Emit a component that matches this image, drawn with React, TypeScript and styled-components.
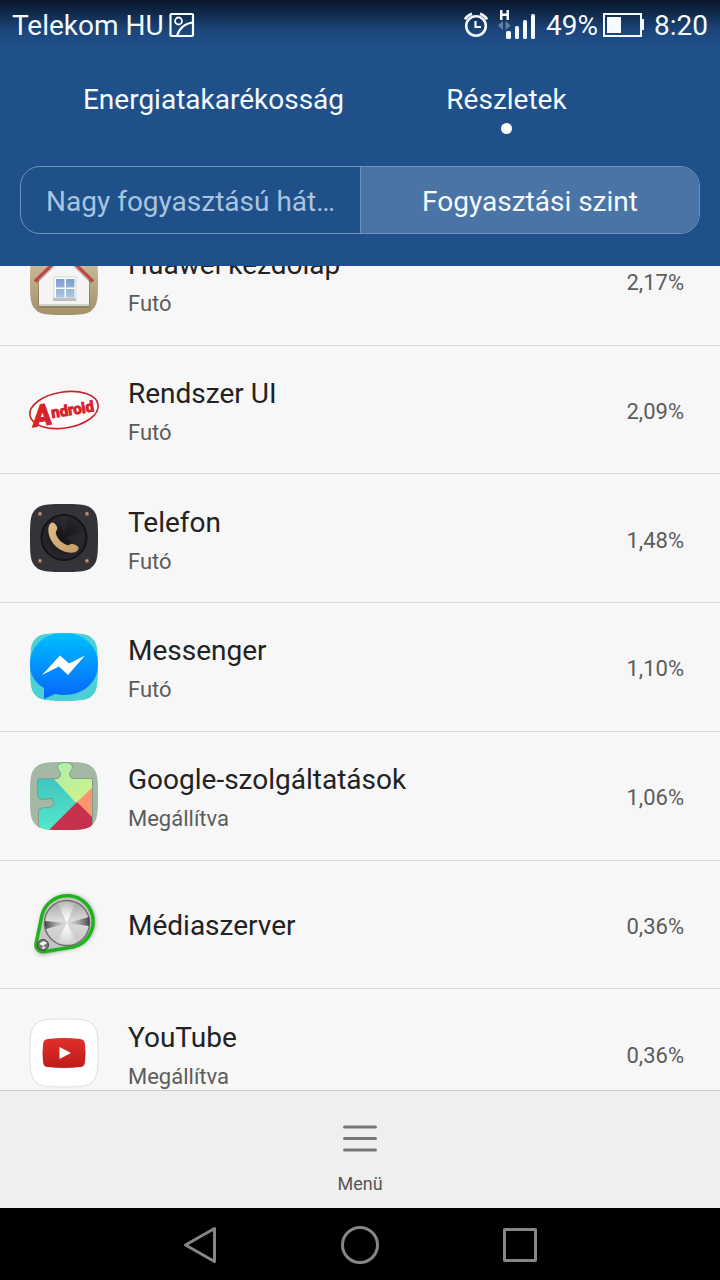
import React from "react";
import styled, { createGlobalStyle } from "styled-components";

const GlobalStyle = createGlobalStyle`
  *, *::before, *::after { box-sizing: border-box; }
  body { margin: 0; background: #000; font-family: Roboto, "Liberation Sans", sans-serif; }
  button { margin: 0; padding: 0; border: 0; background: none; color: inherit; font: inherit; cursor: pointer; }
  svg { display: block; flex: none; }
`;

const Screen = styled.div`
  display: flex;
  flex-direction: column;
  height: 100vh;
  background: #f7f7f7;
`;

const Header = styled.header`
  flex: none;
  padding-bottom: 32px;
  color: #f4faff;
  background: linear-gradient(#081729 0, #0f2848 12px, #1b457a 30px, #1f5089 46px);
`;

const StatusBar = styled.div`
  display: flex;
  justify-content: space-between;
  height: 50px;
  padding: 2px 12px 0;
  font-size: 28px;
  line-height: 50px;
`;

const StatusGroup = styled.div<{ $gap: number }>`
  display: flex;
  align-items: center;
  gap: ${(p) => p.$gap}px;
`;

const Power = styled.span`
  display: flex;
  align-items: center;
  gap: 5px;
`;

const Tabs = styled.nav`
  display: grid;
  grid-template-columns: 1fr 1fr;
  padding: 30px 67px 0;
`;

const Tab = styled.button<{ $active?: boolean }>`
  display: flex;
  flex-direction: column;
  align-items: center;
  gap: 3px;
  height: 86px;
  font-size: 28px;
  line-height: 40px;
  &::after {
    content: "";
    width: 11px;
    height: 11px;
    border-radius: 50%;
    background: ${(p) => (p.$active ? "#fff" : "transparent")};
  }
`;

const Segments = styled.div`
  display: grid;
  grid-template-columns: 1fr 1fr;
  height: 68px;
  margin: 0 20px;
  border: 1px solid #6c93bf;
  border-radius: 20px;
  overflow: hidden;
`;

const Segment = styled.button<{ $active?: boolean }>`
  padding: 2px 20px 0;
  font-size: 28px;
  overflow: hidden;
  white-space: nowrap;
  text-overflow: ellipsis;
  color: ${(p) => (p.$active ? "#f4faff" : "#a9c4e0")};
  background: ${(p) => (p.$active ? "#4a74a5" : "transparent")};
  border-left: ${(p) => (p.$active ? "1px solid #6c93bf" : "0")};
`;

const Viewport = styled.main`
  flex: 1;
  min-height: 0;
  overflow: hidden;
`;

const AppList = styled.ul`
  display: grid;
  grid-auto-rows: 1fr;
  height: 901px;
  list-style: none;
  margin: -49px 0 0;
  padding: 0;
`;

const Row = styled.li`
  display: flex;
  align-items: center;
  gap: 30px;
  padding: 0 36px 0 30px;
  border-bottom: 1px solid #dadada;
`;

const Labels = styled.div<{ $single: boolean }>`
  flex: 1;
  padding-top: ${(p) => (p.$single ? 3 : 7)}px;
`;

const Name = styled.div`
  font-size: 28px;
  line-height: 40px;
  color: #222;
`;

const State = styled.div`
  font-size: 22px;
  line-height: 38px;
  color: #5c5c5c;
`;

const Share = styled.div`
  padding-top: 4px;
  font-size: 22px;
  color: #5c5c5c;
`;

const Toolbar = styled.footer`
  flex: none;
  display: flex;
  justify-content: center;
  height: 118px;
  border-top: 1px solid #cbcbcb;
  background: #efefef;
`;

const MenuButton = styled.button`
  display: flex;
  flex-direction: column;
  align-items: center;
  gap: 18px;
  padding: 34px 40px 0;
  font-size: 18px;
  line-height: 28px;
  color: #555;
`;

const NavBar = styled.nav`
  flex: none;
  display: flex;
  justify-content: center;
  gap: 100px;
  height: 72px;
  padding-top: 2px;
  background: #000;
`;

const NavButton = styled.button`
  display: grid;
  place-items: center;
  width: 60px;
`;

const PictureIcon = () => (
  <svg width="26" height="28" viewBox="0 0 26 28" fill="none" stroke="currentColor" strokeWidth="2.200">
    <rect x="1.500" y="2" width="22.500" height="22" rx="1" />
    <circle cx="9.500" cy="9" r="3.500" strokeWidth="1.800" />
    <path d="M8 24C10 17 15 11.500 24 10.500" />
  </svg>
);

const AlarmIcon = () => (
  <svg width="24" height="28" viewBox="0 0 24 28" fill="none" stroke="currentColor" strokeWidth="2.600">
    <circle cx="12" cy="14" r="9.800" />
    <path d="M11.500 9V15H17" strokeWidth="2.200" />
    <path d="M1 7.500Q3 3.500 8 1.800M23 7.500Q21 3.500 16 1.800" />
  </svg>
);

const SignalIcon = () => (
  <svg width="38" height="34" viewBox="0 0 38 34" fill="currentColor">
    <path d="M2 1h2.500v3.600h4V1H11v10H8.500V6.900h-4V11H2z" />
    <path d="M0 16.500l5-4.500v9zM12.500 16.500l-5-4.500v9z" fill="#6180a6" />
    <rect x="8" y="22" width="5" height="8" rx="1.500" />
    <rect x="17" y="17" width="4" height="13" rx="1.500" />
    <rect x="25" y="11" width="4" height="19" rx="1.500" />
    <rect x="33" y="5" width="4" height="25" rx="1.500" />
  </svg>
);

const BatteryIcon = () => (
  <svg width="41" height="28" viewBox="0 0 41 28">
    <rect x="1" y="2" width="37" height="22" fill="none" stroke="currentColor" strokeWidth="2" />
    <rect x="4" y="5" width="14" height="16" fill="currentColor" />
    <path d="M38 7h3v11h-3z" fill="currentColor" />
  </svg>
);

const TILE =
  "M34 0C47 0 54 0.300 58.500 2.500C61.500 4 64 6.500 65.500 9.500C67.700 14 68 21 68 34S67.700 54 65.500 58.500C64 61.500 61.500 64 58.500 65.500C54 67.700 47 68 34 68S14 67.700 9.500 65.500C6.500 64 4 61.500 2.500 58.500C0.300 54 0 47 0 34S0.300 14 2.500 9.500C4 6.500 6.500 4 9.500 2.500C14 0.300 21 0 34 0Z";

const PIECE =
  "M10 17H25Q31 17 31 11Q28 8 28 5Q28 1 35 1Q42 1 42 5Q42 8 39 11Q39 17 45 17H62V68H9V49Q10 46 14 46Q24 47 24 41Q24 34 15 37Q8 38 8 32V19Q8 17 10 17Z";

const HomeIcon = () => (
  <svg width="68" height="68" viewBox="0 0 68 68">
    <defs>
      <linearGradient id="homeBg" x2="0" y2="1">
        <stop stopColor="#d5c6a4" />
        <stop offset="1" stopColor="#a3906a" />
      </linearGradient>
      <linearGradient id="pane" x2="0" y2="1">
        <stop stopColor="#7c9dcc" />
        <stop offset="1" stopColor="#b0c6e2" />
      </linearGradient>
    </defs>
    <path d={TILE} fill="url(#homeBg)" />
    <path d="M8 32L34 8L60 32V61H8Z" fill="#7c6b4a" opacity=".5" />
    <path d="M9 32L34 8L59 32V59H9Z" fill="#f4f4f4" />
    <path d="M9 57H59V59H9Z" fill="#d2d0cc" />
    <path d="M5 34.500L34 6L63 34.500" fill="none" stroke="#b94a44" strokeWidth="3.500" />
    <path d="M7 36L34 10L61 36" fill="none" stroke="#7d5b50" strokeWidth="1" opacity=".5" />
    <path d="M23 51H46V54H23Z" fill="#bdbdbd" />
    <rect x="24" y="30" width="22" height="21" fill="#fff" stroke="#d0d4da" />
    <path d="M26 32h8.500v8.500H26zM36 32h8.500v8.500H36zM26 42h8.500v8.500H26zM36 42h8.500v8.500H36z" fill="url(#pane)" />
  </svg>
);

const AndroidIcon = () => (
  <svg width="68" height="68" viewBox="0 0 68 68" overflow="visible">
    <g transform="rotate(-9 34 34)">
      <ellipse cx="34" cy="34" rx="34.500" ry="18" fill="#fff" stroke="#c9252b" strokeWidth="1.600" />
      <g fill="#d8232a" stroke="#d8232a" fontWeight="700" fontFamily="Roboto, sans-serif">
        <text x="2" y="46" fontSize="29" strokeWidth="1.400" fontStyle="italic">A</text>
        <text x="21" y="40" fontSize="15" strokeWidth="1">ndroid</text>
      </g>
    </g>
  </svg>
);

const PhoneIcon = () => (
  <svg width="68" height="68" viewBox="0 0 68 68">
    <defs>
      <radialGradient id="dial">
        <stop stopColor="#151418" />
        <stop offset="1" stopColor="#29272d" />
      </radialGradient>
      <linearGradient id="brass" x2="1" y2="1">
        <stop stopColor="#e0bd88" />
        <stop offset="1" stopColor="#c59d63" />
      </linearGradient>
    </defs>
    <path d={TILE} fill="#34333a" />
    <circle cx="34" cy="33.500" r="22.500" fill="url(#dial)" stroke="#141317" strokeWidth="2" />
    <path d="M34 33.500L29 13Q34 11 39 13ZM34 33.500L52 44Q55 36 54 28Z" fill="#3a383e" opacity=".3" />
    <path
      d="M20.500 19.500C23 17 26 20 27 23C28 26 25 27 26 30C28 36 32 39 37 41C40 42 40 39 43 40C47 41 50 43 48 46C45 50 38 49 33 47C26 44 21 38 19 31C18 26 18 22 20.500 19.500Z"
      fill="url(#brass)"
    />
    {[10, 57].map((x) =>
      [10, 57].map((y) => (
        <g key={`${x}-${y}`}>
          <circle cx={x} cy={y} r="2.200" fill="#8a623e" />
          <circle cx={x} cy={y - 0.5} r="1.100" fill="#d5ab7d" />
        </g>
      ))
    )}
  </svg>
);

const MessengerIcon = () => (
  <svg width="68" height="68" viewBox="0 0 68 68">
    <defs>
      <linearGradient id="bubble" x2="0" y2="1">
        <stop stopColor="#00c0ff" />
        <stop offset="1" stopColor="#0664fd" />
      </linearGradient>
      <clipPath id="messengerClip"><path d={TILE} /></clipPath>
    </defs>
    <g clipPath="url(#messengerClip)">
      <path d={TILE} fill="#4dd0d3" />
      <path d="M34 0C54 0 68 13 68 31S54 62 34 62Q29 62 25 61L14 66V55C4 49 0 41 0 31C0 13 14 0 34 0Z" fill="url(#bubble)" />
    </g>
    <path d="M12 42L30 22.500L39 30.500L55 22.500L38 42L29 33.500Z" fill="#fff" />
  </svg>
);

const PuzzleIcon = () => (
  <svg width="68" height="68" viewBox="0 0 68 68">
    <defs>
      <linearGradient id="teal" x2="0" y2="1">
        <stop stopColor="#3bb8be" />
        <stop offset="1" stopColor="#52e8ca" />
      </linearGradient>
      <linearGradient id="lime" x2="1" y2="1">
        <stop stopColor="#a5edb0" />
        <stop offset="1" stopColor="#d8f287" />
      </linearGradient>
      <clipPath id="tileClip"><path d={TILE} /></clipPath>
      <clipPath id="pieceClip"><path d={PIECE} /></clipPath>
    </defs>
    <g clipPath="url(#tileClip)">
      <rect width="68" height="68" fill="#a3b9a4" />
      <path d={PIECE} fill="none" stroke="#7d9686" strokeWidth="1.600" />
      <g clipPath="url(#pieceClip)">
        <path d="M-4 0H8L48 42L20 68H-4Z" fill="url(#teal)" />
        <path d="M8 0H68V24L47 42L24 17Z" fill="url(#lime)" />
        <path d="M46 41L66 22V60Z" fill="#fc966f" />
        <path d="M47 40L66 59V70H17Z" fill="#c8314e" />
      </g>
    </g>
  </svg>
);

const MediaIcon = () => (
  <svg width="68" height="68" viewBox="0 0 68 68" overflow="visible">
    <defs>
      <linearGradient id="steel" x2="0" y2="1">
        <stop stopColor="#a2a2a2" />
        <stop offset=".45" stopColor="#dcdcdc" />
        <stop offset="1" stopColor="#c6c6c6" />
      </linearGradient>
      <radialGradient id="glint">
        <stop stopColor="#fff" />
        <stop offset="1" stopColor="#fff" stopOpacity=".2" />
      </radialGradient>
      <linearGradient id="streak">
        <stop stopColor="#333" stopOpacity=".9" />
        <stop offset=".5" stopColor="#999" stopOpacity="0" />
        <stop offset="1" stopColor="#333" stopOpacity=".9" />
      </linearGradient>
      <filter id="shade" x="-20%" y="-20%" width="140%" height="140%">
        <feGaussianBlur stdDeviation="2" />
      </filter>
    </defs>
    <path d="M12 25A27 27 0 1 1 44 58L15 64A7 7 0 0 1 6 56Z" fill="#555" opacity=".6" filter="url(#shade)" />
    <path d="M12 25A26 26 0 1 1 43 57L15 61.500A7 7 0 0 1 6 54Z" fill="#c4c4c4" stroke="#1eb31c" strokeWidth="3.500" />
    <circle cx="37" cy="33" r="22.500" fill="url(#steel)" stroke="#707070" strokeWidth="1.500" />
    <path d="M37 33L27 13Q37 9 45 13ZM37 33L26 53Q37 57 47 53Z" fill="url(#glint)" />
    <path d="M37 33L15 31Q14 35 16 39ZM37 33L59 27Q60 31 59 36Z" fill="url(#streak)" />
    <circle cx="13" cy="55" r="5.500" fill="#777" stroke="#444" />
    <path d="M9.500 54Q13 49 17 53L13 56ZM12 59L13 56L16 58Z" fill="#fff" />
  </svg>
);

const YouTubeIcon = () => (
  <svg width="68" height="68" viewBox="0 0 68 68" overflow="visible">
    <defs>
      <linearGradient id="tube" x2="0" y2="1">
        <stop stopColor="#e02f2b" />
        <stop offset="1" stopColor="#bf1c1b" />
      </linearGradient>
    </defs>
    <path d={TILE} fill="#fff" stroke="#dedede" />
    <path d="M18 20Q34 18 50 20Q55 20 55 26Q56 34 55 42Q55 48 50 48Q34 50 18 48Q13 48 13 42Q12 34 13 26Q13 20 18 20Z" fill="url(#tube)" />
    <path d="M29.500 28V40L41 34Z" fill="#fff" />
  </svg>
);

type Entry = { name: string; state?: string; share: string; icon: React.ReactNode };

const entries: Entry[] = [
  { name: "Huawei kezdőlap", state: "Futó", share: "2,17%", icon: <HomeIcon /> },
  { name: "Rendszer UI", state: "Futó", share: "2,09%", icon: <AndroidIcon /> },
  { name: "Telefon", state: "Futó", share: "1,48%", icon: <PhoneIcon /> },
  { name: "Messenger", state: "Futó", share: "1,10%", icon: <MessengerIcon /> },
  { name: "Google-szolgáltatások", state: "Megállítva", share: "1,06%", icon: <PuzzleIcon /> },
  { name: "Médiaszerver", share: "0,36%", icon: <MediaIcon /> },
  { name: "YouTube", state: "Megállítva", share: "0,36%", icon: <YouTubeIcon /> },
];

export default function App() {
  return (
    <Screen>
      <GlobalStyle />
      <Header>
        <StatusBar>
          <StatusGroup $gap={5}>
            <span>Telekom HU</span>
            <PictureIcon />
          </StatusGroup>
          <StatusGroup $gap={10}>
            <AlarmIcon />
            <SignalIcon />
            <Power>
              <span>49%</span>
              <BatteryIcon />
            </Power>
            <span>8:20</span>
          </StatusGroup>
        </StatusBar>
        <Tabs>
          <Tab>Energiatakarékosság</Tab>
          <Tab $active aria-current="page">Részletek</Tab>
        </Tabs>
        <Segments>
          <Segment aria-pressed={false}>Nagy fogyasztású hát…</Segment>
          <Segment $active aria-pressed>Fogyasztási szint</Segment>
        </Segments>
      </Header>
      <Viewport>
        <AppList>
          {entries.map((e) => (
            <Row key={e.name}>
              {e.icon}
              <Labels $single={!e.state}>
                <Name>{e.name}</Name>
                {e.state && <State>{e.state}</State>}
              </Labels>
              <Share>{e.share}</Share>
            </Row>
          ))}
        </AppList>
      </Viewport>
      <Toolbar>
        <MenuButton>
          <svg width="34" height="27" viewBox="0 0 34 27" stroke="#777" strokeWidth="3" strokeLinecap="round">
            <path d="M1.500 2H32.500M1.500 13.500H32.500M1.500 25H32.500" />
          </svg>
          Menü
        </MenuButton>
      </Toolbar>
      <NavBar>
        <NavButton aria-label="Vissza">
          <svg width="40" height="40" viewBox="0 0 40 40" fill="none" stroke="#868686" strokeWidth="3" strokeLinejoin="round">
            <path d="M5.500 20L34.500 3.500V36.500Z" />
          </svg>
        </NavButton>
        <NavButton aria-label="Kezdőlap">
          <svg width="40" height="40" viewBox="0 0 40 40" fill="none" stroke="#868686" strokeWidth="3">
            <circle cx="20" cy="20" r="17.500" />
          </svg>
        </NavButton>
        <NavButton aria-label="Legutóbbiak">
          <svg width="40" height="40" viewBox="0 0 40 40" fill="none" stroke="#868686" strokeWidth="3" strokeLinejoin="round">
            <path d="M4.500 4.500H35.500V35.500H4.500Z" />
          </svg>
        </NavButton>
      </NavBar>
    </Screen>
  );
}
